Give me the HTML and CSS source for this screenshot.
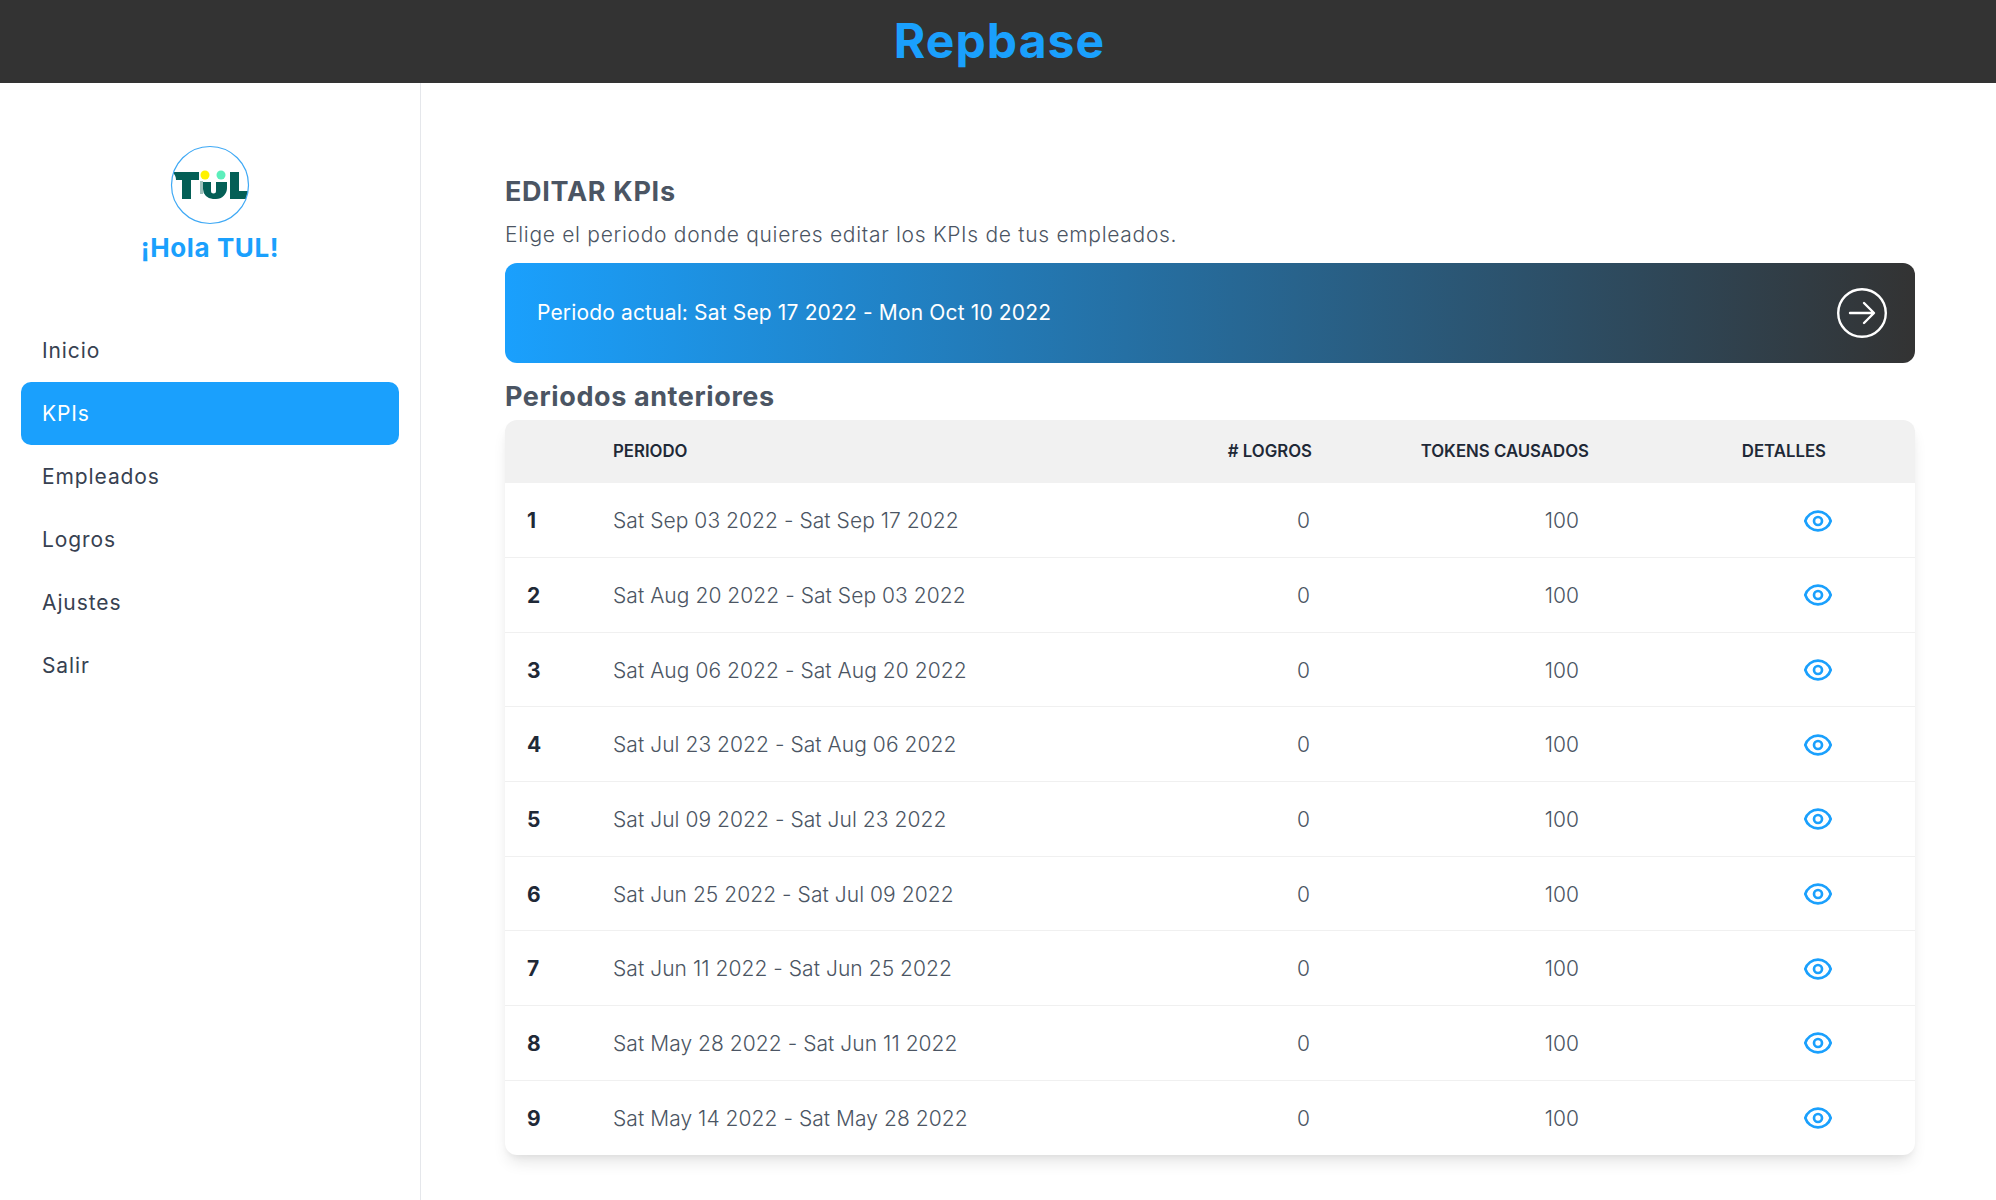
FILE: index.html
```html
<!DOCTYPE html>
<html lang="es">

<head>
    <meta charset="UTF-8">
    <meta name="viewport" content="width=device-width, initial-scale=1.0">
    <title>Repbase</title>
    <link rel="stylesheet" href="styles.css">
</head>

<body>
    <header class="topbar">
        <h1 class="brand">Repbase</h1>
    </header>

    <div class="layout">
        <aside class="sidebar">
            <div class="profile">
                <svg class="avatar" viewBox="0 0 80 80" aria-label="TUL">
                    <defs>
                        <clipPath id="avatarClip">
                            <circle cx="40" cy="40" r="38.5"></circle>
                        </clipPath>
                    </defs>
                    <circle cx="40" cy="40" r="38.5" fill="#fff"></circle>
                    <g clip-path="url(#avatarClip)">
                        <path fill="#045f56" d="M2 27h27v8h-8v19h-9V35H6c0-3-1-6-4-8z"></path>
                        <rect x="30" y="36" width="3" height="13" fill="#9fc0bb"></rect>
                        <path fill="#045f56" d="M33 37h8v9a2.5 2.5 0 0 0 5 0v-9h11v6a11 11 0 0 1-11 11h-3a10 10 0 0 1-10-10z"></path>
                        <path fill="#045f56" d="M60 27h9v19h11v8H60z"></path>
                        <circle cx="35" cy="30" r="4.5" fill="#fff200"></circle>
                        <circle cx="51" cy="30" r="4.5" fill="#5ceebb"></circle>
                    </g>
                    <circle cx="40" cy="40" r="38.5" fill="none" stroke="#3fa9f5" stroke-width="1.2"></circle>
                </svg>
                <div class="greeting">¡Hola TUL!</div>
            </div>
            <nav class="menu">
                <a class="menu-item" href="#">Inicio</a>
                <a class="menu-item active" href="#">KPIs</a>
                <a class="menu-item" href="#">Empleados</a>
                <a class="menu-item" href="#">Logros</a>
                <a class="menu-item" href="#">Ajustes</a>
                <a class="menu-item" href="#">Salir</a>
            </nav>
        </aside>

        <main class="content">
            <h2 class="page-title">EDITAR KPIs</h2>
            <p class="page-desc">Elige el periodo donde quieres editar los KPIs de tus empleados.</p>

            <a class="current-period" href="#">
                <span class="current-label">Periodo actual: Sat Sep 17 2022 - Mon Oct 10 2022</span>
                <svg class="arrow-icon" viewBox="0 0 50 50" fill="none" stroke="#fff" stroke-width="2.4" stroke-linecap="round" stroke-linejoin="round">
                    <circle cx="25" cy="25" r="23.8"></circle>
                    <path d="M13 25h23M27 15l10 10-10 10"></path>
                </svg>
            </a>

            <h3 class="section-title">Periodos anteriores</h3>

            <div class="table-card">
                <table class="periods">
                    <thead>
                        <tr>
                            <th class="col-num"></th>
                            <th class="col-period">Periodo</th>
                            <th class="col-logros"># Logros</th>
                            <th class="col-tokens">Tokens causados</th>
                            <th class="col-details">Detalles</th>
                        </tr>
                    </thead>
                    <tbody>
                        <tr>
                            <td class="num">1</td>
                            <td>Sat Sep 03 2022 - Sat Sep 17 2022</td>
                            <td class="logros">0</td>
                            <td class="tokens">100</td>
                            <td class="details"><svg class="eye" viewBox="0 0 24 24"><path d="M15 12a3 3 0 11-6 0 3 3 0 016 0z"></path><path d="M2.458 12C3.732 7.943 7.523 5 12 5c4.478 0 8.268 2.943 9.542 7-1.274 4.057-5.064 7-9.542 7-4.477 0-8.268-2.943-9.542-7z"></path></svg></td>
                        </tr>
                        <tr>
                            <td class="num">2</td>
                            <td>Sat Aug 20 2022 - Sat Sep 03 2022</td>
                            <td class="logros">0</td>
                            <td class="tokens">100</td>
                            <td class="details"><svg class="eye" viewBox="0 0 24 24"><path d="M15 12a3 3 0 11-6 0 3 3 0 016 0z"></path><path d="M2.458 12C3.732 7.943 7.523 5 12 5c4.478 0 8.268 2.943 9.542 7-1.274 4.057-5.064 7-9.542 7-4.477 0-8.268-2.943-9.542-7z"></path></svg></td>
                        </tr>
                        <tr>
                            <td class="num">3</td>
                            <td>Sat Aug 06 2022 - Sat Aug 20 2022</td>
                            <td class="logros">0</td>
                            <td class="tokens">100</td>
                            <td class="details"><svg class="eye" viewBox="0 0 24 24"><path d="M15 12a3 3 0 11-6 0 3 3 0 016 0z"></path><path d="M2.458 12C3.732 7.943 7.523 5 12 5c4.478 0 8.268 2.943 9.542 7-1.274 4.057-5.064 7-9.542 7-4.477 0-8.268-2.943-9.542-7z"></path></svg></td>
                        </tr>
                        <tr>
                            <td class="num">4</td>
                            <td>Sat Jul 23 2022 - Sat Aug 06 2022</td>
                            <td class="logros">0</td>
                            <td class="tokens">100</td>
                            <td class="details"><svg class="eye" viewBox="0 0 24 24"><path d="M15 12a3 3 0 11-6 0 3 3 0 016 0z"></path><path d="M2.458 12C3.732 7.943 7.523 5 12 5c4.478 0 8.268 2.943 9.542 7-1.274 4.057-5.064 7-9.542 7-4.477 0-8.268-2.943-9.542-7z"></path></svg></td>
                        </tr>
                        <tr>
                            <td class="num">5</td>
                            <td>Sat Jul 09 2022 - Sat Jul 23 2022</td>
                            <td class="logros">0</td>
                            <td class="tokens">100</td>
                            <td class="details"><svg class="eye" viewBox="0 0 24 24"><path d="M15 12a3 3 0 11-6 0 3 3 0 016 0z"></path><path d="M2.458 12C3.732 7.943 7.523 5 12 5c4.478 0 8.268 2.943 9.542 7-1.274 4.057-5.064 7-9.542 7-4.477 0-8.268-2.943-9.542-7z"></path></svg></td>
                        </tr>
                        <tr>
                            <td class="num">6</td>
                            <td>Sat Jun 25 2022 - Sat Jul 09 2022</td>
                            <td class="logros">0</td>
                            <td class="tokens">100</td>
                            <td class="details"><svg class="eye" viewBox="0 0 24 24"><path d="M15 12a3 3 0 11-6 0 3 3 0 016 0z"></path><path d="M2.458 12C3.732 7.943 7.523 5 12 5c4.478 0 8.268 2.943 9.542 7-1.274 4.057-5.064 7-9.542 7-4.477 0-8.268-2.943-9.542-7z"></path></svg></td>
                        </tr>
                        <tr>
                            <td class="num">7</td>
                            <td>Sat Jun 11 2022 - Sat Jun 25 2022</td>
                            <td class="logros">0</td>
                            <td class="tokens">100</td>
                            <td class="details"><svg class="eye" viewBox="0 0 24 24"><path d="M15 12a3 3 0 11-6 0 3 3 0 016 0z"></path><path d="M2.458 12C3.732 7.943 7.523 5 12 5c4.478 0 8.268 2.943 9.542 7-1.274 4.057-5.064 7-9.542 7-4.477 0-8.268-2.943-9.542-7z"></path></svg></td>
                        </tr>
                        <tr>
                            <td class="num">8</td>
                            <td>Sat May 28 2022 - Sat Jun 11 2022</td>
                            <td class="logros">0</td>
                            <td class="tokens">100</td>
                            <td class="details"><svg class="eye" viewBox="0 0 24 24"><path d="M15 12a3 3 0 11-6 0 3 3 0 016 0z"></path><path d="M2.458 12C3.732 7.943 7.523 5 12 5c4.478 0 8.268 2.943 9.542 7-1.274 4.057-5.064 7-9.542 7-4.477 0-8.268-2.943-9.542-7z"></path></svg></td>
                        </tr>
                        <tr>
                            <td class="num">9</td>
                            <td>Sat May 14 2022 - Sat May 28 2022</td>
                            <td class="logros">0</td>
                            <td class="tokens">100</td>
                            <td class="details"><svg class="eye" viewBox="0 0 24 24"><path d="M15 12a3 3 0 11-6 0 3 3 0 016 0z"></path><path d="M2.458 12C3.732 7.943 7.523 5 12 5c4.478 0 8.268 2.943 9.542 7-1.274 4.057-5.064 7-9.542 7-4.477 0-8.268-2.943-9.542-7z"></path></svg></td>
                        </tr>
                    </tbody>
                </table>
            </div>
        </main>
    </div>
</body>

</html>
```

FILE: styles.css
```css
/* Repbase - pagina de KPIs */
body {
    font-family: 'Inter', 'Noto Sans', sans-serif;
    color: #4b5563;
    background: #fff;
    margin: 0;
    height: 1200px;
    overflow: hidden;
}

.topbar {
    background: #333333;
    height: 83px;
    display: flex;
    justify-content: center;
    align-items: center;
}

.brand {
    margin: 0 0 2px 3px;
    color: #1aa0fd;
    font-size: 48px;
    font-weight: 700;
    letter-spacing: 1.1px;
}

.layout {
    display: flex;
    height: 1117px;
}

.sidebar {
    width: 421px;
    flex-shrink: 0;
    border-right: 1px solid #e5e7eb;
    padding: 62px 21px 0;
    box-sizing: border-box;
}

.profile {
    display: flex;
    flex-direction: column;
    align-items: center;
}

.avatar {
    width: 80px;
    height: 80px;
}

.greeting {
    color: #1aa0fd;
    font-size: 26px;
    font-weight: 700;
    letter-spacing: 0.6px;
    line-height: 32px;
    margin-top: 7px;
}

.menu {
    margin-top: 55px;
    display: flex;
    flex-direction: column;
}

.menu-item {
    height: 63px;
    display: flex;
    align-items: center;
    padding: 0 21px;
    border-radius: 10px;
    color: #374151;
    font-size: 21px;
    letter-spacing: 0.9px;
    text-decoration: none;
}

.menu-item.active {
    background: #1aa0fd;
    color: #fff;
}

.content {
    flex: 1;
    padding: 91px 81px 0 84px;
    min-width: 0;
}

.page-title {
    margin: 0;
    font-size: 27px;
    line-height: 36px;
    font-weight: 700;
    letter-spacing: 0.7px;
    color: #4b5563;
}

.page-desc {
    margin: 7px 0 0;
    font-size: 21px;
    font-weight: 300;
    line-height: 36px;
    letter-spacing: 0.7px;
    color: #4b5563;
}

.current-period {
    display: flex;
    align-items: center;
    justify-content: space-between;
    height: 100px;
    margin-top: 10px;
    padding: 0 28px 0 32px;
    border-radius: 12px;
    background: linear-gradient(90deg, #1aa0fd, #333333);
    color: #fff;
    font-size: 21px;
    letter-spacing: 0.15px;
    text-decoration: none;
}

.current-label {
    padding-bottom: 2px;
}

.arrow-icon {
    width: 50px;
    height: 50px;
}

.section-title {
    margin: 16px 0 0;
    font-size: 27px;
    line-height: 36px;
    font-weight: 700;
    letter-spacing: 0.6px;
    color: #4b5563;
}

.table-card {
    margin-top: 5px;
    border-radius: 12px;
    background: #fff;
    overflow: hidden;
    box-shadow: 0 10px 15px -3px rgba(0, 0, 0, 0.1), 0 4px 6px -2px rgba(0, 0, 0, 0.05);
}

.periods {
    width: 100%;
    border-collapse: collapse;
    table-layout: fixed;
}

.periods th {
    height: 63px;
    padding: 0 0 2px;
    box-sizing: border-box;
    background: #f1f1f1;
    color: #1f2937;
    font-size: 16.8px;
    font-weight: 600;
    text-transform: uppercase;
    text-align: right;
}

.periods td {
    height: 74.67px;
    padding: 1px 0 0;
    border-top: 1px solid #f0f0f0;
    box-sizing: border-box;
    font-size: 21px;
    font-weight: 300;
    letter-spacing: 0.05px;
    color: #4b5563;
}

.periods tbody tr:first-child td {
    border-top: none;
}

.periods .col-num {
    width: 108px;
}

.periods .col-period {
    text-align: left;
    width: 512px;
}

.periods .col-logros {
    width: 187px;
}

.periods .col-tokens {
    width: 277px;
}

.periods .col-details {
    padding-right: 89px;
}

.periods .num {
    padding-left: 22px;
    font-weight: 700;
    color: #1f2937;
}

.periods .logros {
    text-align: right;
    padding-right: 2px;
}

.periods .tokens {
    text-align: right;
    padding-right: 10px;
}

.periods .details {
    text-align: right;
    padding-right: 81px;
}

.eye {
    display: block;
    width: 32px;
    height: 32px;
    margin-left: auto;
    fill: none;
    stroke: #1aa0fd;
    stroke-width: 2;
    stroke-linecap: round;
    stroke-linejoin: round;
}
```
